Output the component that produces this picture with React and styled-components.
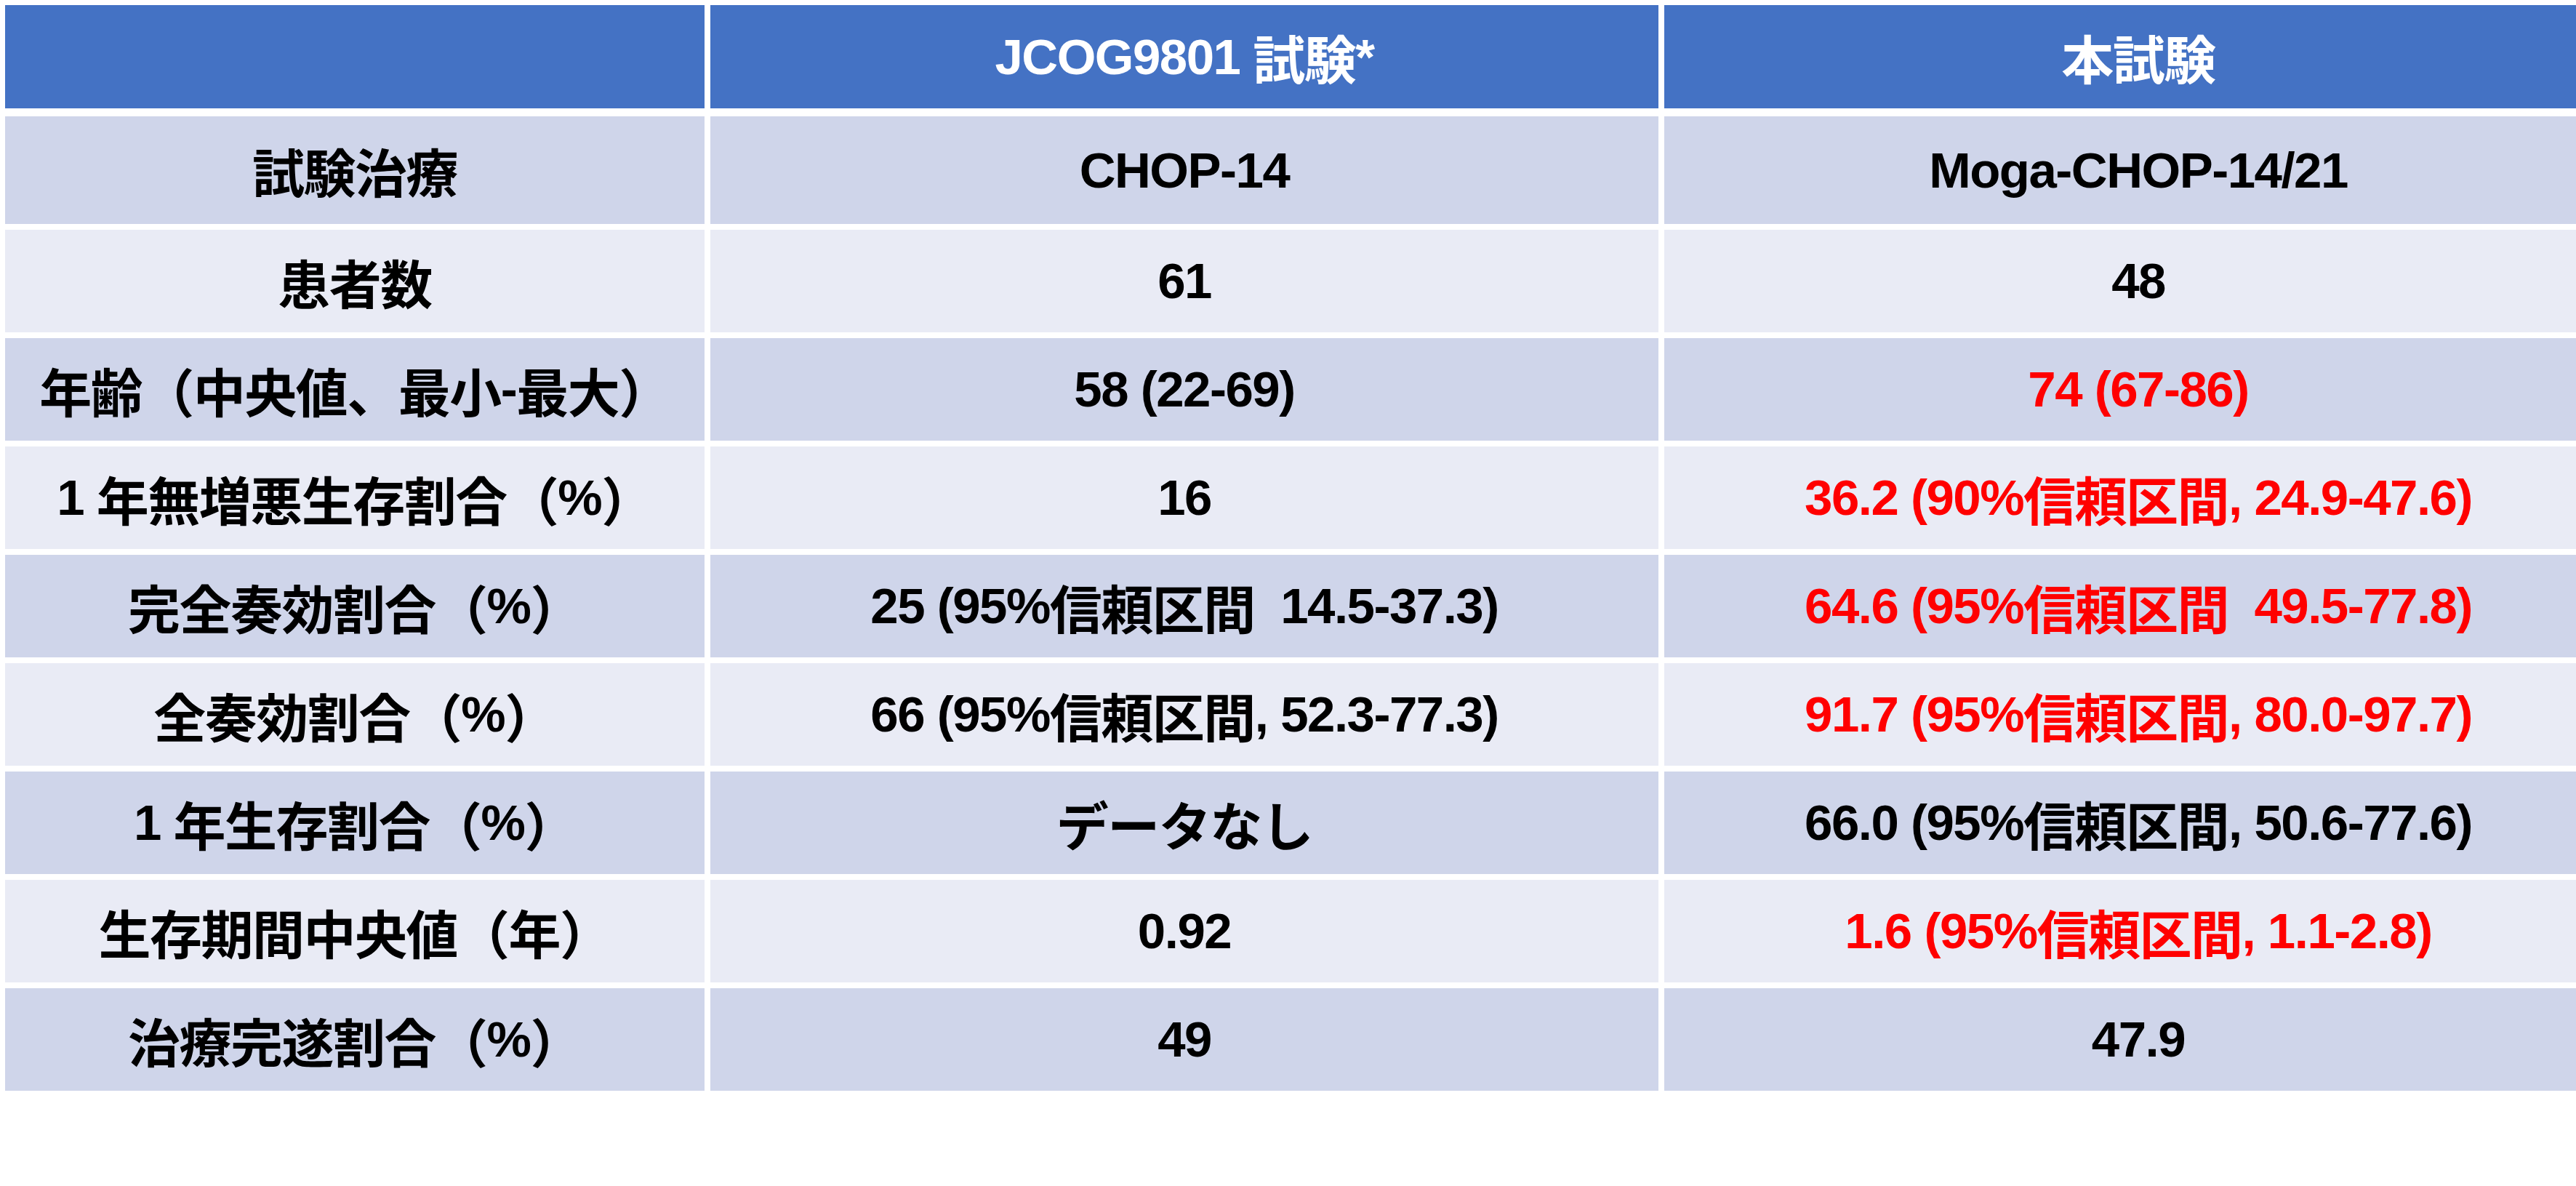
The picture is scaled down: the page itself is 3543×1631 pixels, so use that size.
import styled, { createGlobalStyle } from 'styled-components'

const GlobalStyle = createGlobalStyle`
  html, body {
    margin: 0;
    padding: 0;
    background: #ffffff;
  }
  body {
    font-family: "Liberation Sans", "Noto Sans CJK JP", sans-serif;
  }
`

const Page = styled.div`
  width: 3543px;
  height: 1631px;
  padding: 7px 0 0 7px;
  box-sizing: border-box;
  overflow: hidden;
`

const Table = styled.div`
  display: flex;
  flex-direction: column;
  gap: 8px;
  width: 3592px;
`

const Row = styled.div`
  display: grid;
  grid-template-columns: 962px 1304px 1304px;
  column-gap: 8px;
  height: ${(p) => p.h}px;
  margin-bottom: ${(p) => (p.head ? 3 : 0)}px;
`

const Cell = styled.div`
  display: flex;
  align-items: center;
  justify-content: center;
  background: ${(p) => (p.head ? '#4472C4' : p.odd ? '#CFD5EA' : '#E9EBF5')};
  color: ${(p) => (p.head ? '#ffffff' : p.red ? '#FF0000' : '#000000')};
  font-size: 69px;
  font-weight: 700;
  letter-spacing: -1.5px;
  white-space: pre;
  line-height: 1;
`

// kanji/kana runs sit a touch larger than the latin text, like the slide font
const Kanji = styled.span`
  font-family: "Noto Sans CJK JP", sans-serif;
  font-size: 72px;
  letter-spacing: -1.5px;
`

const cjk = /([\u3000-\u30ff\u4e00-\u9fff\uff00-\uffef]+)/

const Txt = ({ children }) =>
  String(children)
    .split(cjk)
    .filter(Boolean)
    .map((part, i) => (cjk.test(part) ? <Kanji key={i}>{part}</Kanji> : <span key={i}>{part}</span>))

const rows = [
  ['試験治療', 'CHOP-14', 'Moga-CHOP-14/21', false],
  ['患者数', '61', '48', false],
  ['年齢（中央値、最小-最大）', '58 (22-69)', '74 (67-86)', true],
  ['1 年無増悪生存割合（%）', '16', '36.2 (90%信頼区間, 24.9-47.6)', true],
  ['完全奏効割合（%）', '25 (95%信頼区間  14.5-37.3)', '64.6 (95%信頼区間  49.5-77.8)', true],
  ['全奏効割合（%）', '66 (95%信頼区間, 52.3-77.3)', '91.7 (95%信頼区間, 80.0-97.7)', true],
  ['1 年生存割合（%）', 'データなし', '66.0 (95%信頼区間, 50.6-77.6)', false],
  ['生存期間中央値（年）', '0.92', '1.6 (95%信頼区間, 1.1-2.8)', true],
  ['治療完遂割合（%）', '49', '47.9', false],
]

const App = () => {
  return (
    <Page>
      <GlobalStyle />
      <Table>
        <Row h={142} head>
          <Cell head></Cell>
          <Cell head><Txt>JCOG9801 試験*</Txt></Cell>
          <Cell head><Txt>本試験</Txt></Cell>
        </Row>
        {rows.map(([label, a, b, red], i) => (
          <Row key={label} h={i === 0 ? 148 : 141}>
            <Cell odd={i % 2 === 0}><Txt>{label}</Txt></Cell>
            <Cell odd={i % 2 === 0}><Txt>{a}</Txt></Cell>
            <Cell odd={i % 2 === 0} red={red}><Txt>{b}</Txt></Cell>
          </Row>
        ))}
      </Table>
    </Page>
  )
}

export default App
